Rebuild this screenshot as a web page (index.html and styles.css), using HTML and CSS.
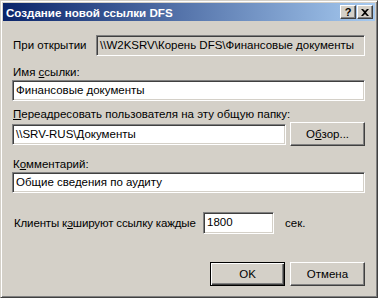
FILE: index.html
```html
<!DOCTYPE html>
<html lang="ru">
<head>
<meta charset="utf-8">
<link rel="stylesheet" href="styles.css">
</head>
<body>
<div class="window">
  <div class="titlebar">
    <span class="title">Создание новой ссылки DFS</span>
    <div class="tbtns">
      <span class="tbtn help">?</span>
      <span class="tbtn close"><svg width="8" height="7" viewBox="0 0 8 7"><path d="M0 0h2l2 2 2-2h2L5 3.5 8 7H6L4 5 2 7H0l3-3.5z" fill="#000"/></svg></span>
    </div>
  </div>
  <div class="content">
    <div class="row open-row">
      <span class="label">При открытии</span>
      <div class="field readonly">\\W2KSRV\Корень DFS\Финансовые документы</div>
    </div>
    <div class="group g-name">
      <span class="label">Имя <u>с</u>сылки:</span>
      <div class="field">Финансовые документы</div>
    </div>
    <div class="group g-redirect">
      <span class="label"><u>П</u>ереадресовать пользователя на эту общую папку:</span>
      <div class="row">
        <div class="field grow">\\SRV-RUS\Документы</div>
        <span class="button browse">О<u>б</u>зор...</span>
      </div>
    </div>
    <div class="group g-comment">
      <span class="label">К<u>о</u>мментарий:</span>
      <div class="field">Общие сведения по аудиту</div>
    </div>
    <div class="row cache-row">
      <span class="label cache-label">Клиенты к<u>э</u>шируют ссылку каждые</span>
      <div class="field small">1800</div>
      <span class="label sec">сек.</span>
    </div>
    <div class="row actions">
      <span class="button default">OK</span>
      <span class="button">Отмена</span>
    </div>
  </div>
</div>
</body>
</html>
```
FILE: styles.css
```css
* { box-sizing: border-box; }
html, body { margin: 0; padding: 0; }
body {
  width: 378px;
  height: 298px;
  font-family: "Liberation Sans", Arial, sans-serif;
  font-size: 11.5px;
  color: #000;
  background: #d4d0c8;
}
.window {
  width: 378px;
  height: 298px;
  background: #d4d0c8;
  border-top: 1px solid #d4d0c8;
  border-left: 1px solid #d4d0c8;
  border-right: 1px solid #404040;
  border-bottom: 1px solid #404040;
  box-shadow: inset 1px 1px 0 #ffffff, inset -1px -1px 0 #808080;
  padding: 2px;
  display: flex;
  flex-direction: column;
}
.titlebar {
  height: 18px;
  background: linear-gradient(to right, #0a246a, #a6caf0);
  display: flex;
  align-items: center;
  justify-content: space-between;
  padding: 0 2px 0 3px;
}
.title {
  color: #fff;
  font-weight: bold;
  font-size: 11.6px;
}
.tbtns { display: flex; gap: 1px; }
.tbtn {
  width: 16px;
  height: 14px;
  background: #d4d0c8;
  border-top: 1px solid #fff;
  border-left: 1px solid #fff;
  border-right: 1px solid #404040;
  border-bottom: 1px solid #404040;
  box-shadow: inset -1px -1px 0 #808080;
  display: flex;
  align-items: center;
  justify-content: center;
  font-weight: bold;
  font-size: 11px;
  line-height: 1;
}
.close svg { display: block; }
.content {
  flex: 1;
  display: flex;
  flex-direction: column;
  padding: 14px 10px 0 9px;
}
.row { display: flex; align-items: center; }
.label { line-height: 13px; padding-left: 1px; white-space: nowrap; }
.field {
  height: 21px;
  background: #fff;
  border-top: 1px solid #808080;
  border-left: 1px solid #808080;
  border-right: 1px solid #fff;
  border-bottom: 1px solid #fff;
  box-shadow: inset 1px 1px 0 #404040, inset -1px -1px 0 #d4d0c8;
  padding: 0 3px;
  line-height: 19px;
  white-space: nowrap;
  overflow: hidden;
}
.field.readonly { background: #d4d0c8; flex: 1; margin-left: 11px; }
.open-row .label { width: 73px; }
.group { display: flex; flex-direction: column; gap: 1px; }
.g-name { margin-top: 10px; }
.g-redirect { margin-top: 7px; }
.g-comment { margin-top: 12px; }
.grow { flex: 1; }
.button {
  height: 24px;
  background: #d4d0c8;
  border-top: 1px solid #fff;
  border-left: 1px solid #fff;
  border-right: 1px solid #404040;
  border-bottom: 1px solid #404040;
  box-shadow: inset -1px -1px 0 #808080;
  display: flex;
  align-items: center;
  justify-content: center;
  width: 75px;
}
.browse { margin-left: 4px; }
.cache-row { margin-top: 19px; }
.cache-label { width: 191px; padding-left: 2px; letter-spacing: -0.15px; }
.field.small { width: 71px; height: 22px; }
.sec { margin-left: 10px; }
.actions { margin-top: 28px; justify-content: flex-end; gap: 5px; }
.button.default {
  border: 1px solid #000;
  box-shadow: inset 1px 1px 0 #fff, inset -1px -1px 0 #404040, inset -2px -2px 0 #808080;
}
u { text-decoration: underline; text-underline-offset: 1px; }
```
